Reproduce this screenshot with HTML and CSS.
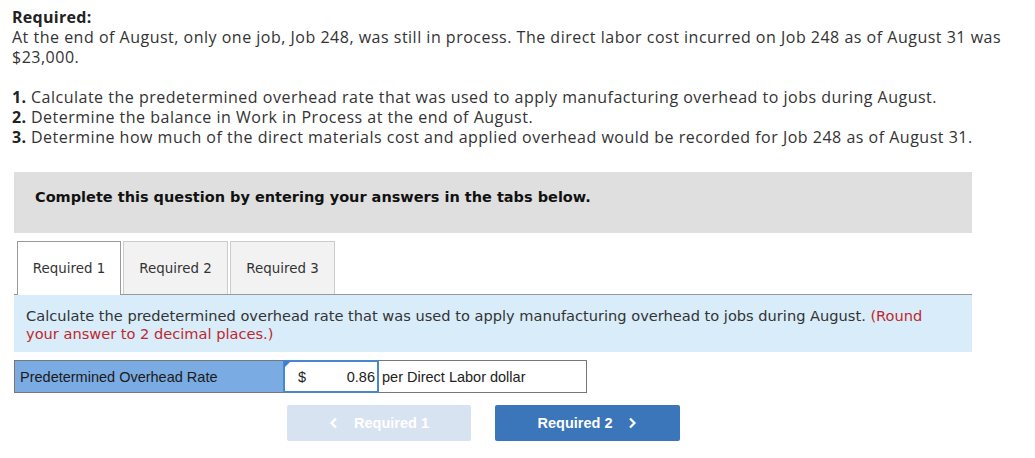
FILE: index.html
```html
<!DOCTYPE html>
<html>
<head>
<meta charset="utf-8">
<link rel="stylesheet" href="styles.css">
</head>
<body>
<div class="intro">
  <p class="req-title">Required:</p>
  <p>At the end of August, only one job, Job 248, was still in process. The direct labor cost incurred on Job 248 as of August 31 was $23,000.</p>
  <p class="spacer">&nbsp;</p>
  <p><b>1.</b> Calculate the predetermined overhead rate that was used to apply manufacturing overhead to jobs during August.</p>
  <p><b>2.</b> Determine the balance in Work in Process at the end of August.</p>
  <p><b>3.</b> Determine how much of the direct materials cost and applied overhead would be recorded for Job 248 as of August 31.</p>
</div>
<div class="work">
  <div class="banner">Complete this question by entering your answers in the tabs below.</div>
  <div class="tabs">
    <div class="tab active">Required 1</div>
    <div class="tab">Required 2</div>
    <div class="tab">Required 3</div>
  </div>
  <div class="instr">Calculate the predetermined overhead rate that was used to apply manufacturing overhead to jobs during August. <span class="red">(Round your answer to 2 decimal places.)</span></div>
  <div class="row">
    <div class="label">Predetermined Overhead Rate</div>
    <div class="input"><span class="cur">$</span><span class="val">0.86</span></div>
    <div class="unit">per Direct Labor dollar</div>
  </div>
  <div class="nav">
    <div class="btn prev"><svg width="10" height="12" viewBox="0 0 10 12"><polyline points="7,1.5 2.5,6 7,10.5" fill="none" stroke="#fff" stroke-width="2.2"/></svg><span>Required 1</span></div>
    <div class="btn next"><span>Required 2</span><svg width="10" height="12" viewBox="0 0 10 12"><polyline points="3,1.5 7.5,6 3,10.5" fill="none" stroke="#fff" stroke-width="2.2"/></svg></div>
  </div>
</div>
</body>
</html>
```
FILE: styles.css
```css
body {
  margin: 0;
  background: #fff;
}
.intro {
  padding: 7px 12px 0 12px;
  width: 1010px;
  font-family: "Open Sans", "Liberation Sans", sans-serif;
  font-size: 16px;
  letter-spacing: 0.5px;
  line-height: 20px;
  color: #333;
}
.intro p {
  margin: 0;
}
.intro b, .req-title {
  font-weight: 700;
  color: #222;
  letter-spacing: 0.3px;
}
.work {
  margin: 25px 0 0 14px;
  width: 958px;
}
.banner {
  background: #dfdfdf;
  height: 61px;
  box-sizing: border-box;
  padding: 16px 0 0 21px;
  line-height: 18px;
  font-family: "DejaVu Sans", Verdana, sans-serif;
  font-weight: 700;
  font-size: 14.5px;
  color: #111;
}
.tabs {
  margin-top: 8px;
  display: flex;
  gap: 2px;
  padding-left: 3px;
  border-bottom: 1px solid #999;
  height: 53px;
}
.tab {
  width: 105px;
  height: 53px;
  box-sizing: border-box;
  border: 1px solid #ccc;
  border-bottom: none;
  background: #f2f2f2;
  display: flex;
  align-items: center;
  justify-content: center;
  font-family: "DejaVu Sans", Tahoma, sans-serif;
  font-size: 13.4px;
  color: #333;
}
.tab.active {
  width: 104px;
  background: #fff;
  border-color: #999;
  height: 54px;
  position: relative;
  z-index: 1;
}
.instr {
  background: #d9ecf9;
  height: 57px;
  box-sizing: border-box;
  padding: 12px 30px 0 12px;
  font-family: "DejaVu Sans", Tahoma, sans-serif;
  font-size: 14.6px;
  line-height: 18px;
  color: #333;
}
.red {
  color: #c0272d;
}
.row {
  margin-top: 8px;
  display: flex;
  height: 33px;
  width: 573px;
  box-sizing: border-box;
  font-family: "Liberation Sans", Arial, sans-serif;
  font-size: 14.5px;
  color: #222;
}
.label {
  width: 269px;
  box-sizing: border-box;
  background: #7aabe2;
  border: 1px solid #777;
  border-right: none;
  display: flex;
  align-items: center;
  padding-left: 5px;
  color: #1a1a1a;
}
.input {
  width: 96px;
  box-sizing: border-box;
  border: 2px solid #4a86cf;
  background: #fff;
  display: flex;
  align-items: center;
  padding: 0 2px 0 13px;
  position: relative;
}
.input::before {
  content: "";
  position: absolute;
  left: -1px;
  top: -1px;
  border-top: 7px solid #3f7fd0;
  border-right: 7px solid transparent;
}
.cur {
  flex: 1;
}
.unit {
  flex: 1;
  box-sizing: border-box;
  border: 1px solid #777;
  border-left: none;
  display: flex;
  align-items: center;
  padding-left: 3px;
}
.nav {
  margin: 12px 0 0 273px;
  display: flex;
  gap: 24px;
}
.btn {
  width: 185px;
  height: 36px;
  border-radius: 2px;
  display: flex;
  align-items: center;
  justify-content: center;
  gap: 15px;
  font-family: "Liberation Sans", Arial, sans-serif;
  font-weight: 700;
  font-size: 14.5px;
  color: #fff;
}
.btn.prev {
  width: 184px;
  background: #d8e3f1;
}
.btn.next {
  background: #3a76b9;
}
```
